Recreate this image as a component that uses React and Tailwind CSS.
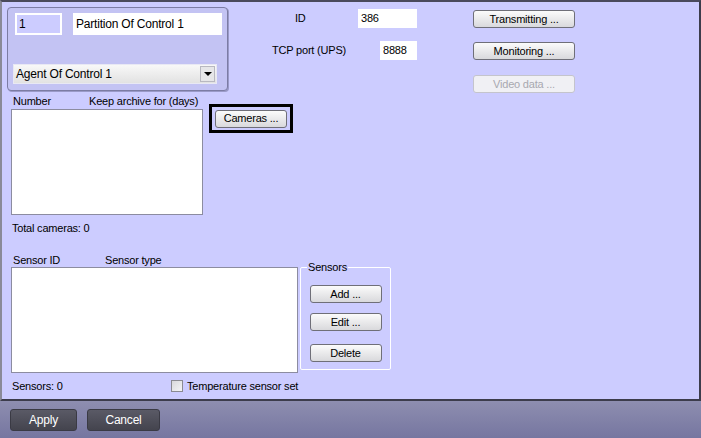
import React from 'react';

const font = { fontFamily: '"Liberation Sans", Arial, sans-serif', letterSpacing: '-0.2px' };

// classic grey XP-style push button
function Btn({ children, className = '', disabled = false }) {
  return (
    <div
      className={`flex items-center justify-center rounded-[3px] border text-[11px] leading-none ${
        disabled
          ? 'border-[#c4c4cc] bg-[#f0f0f4] text-[#a8a8b0]'
          : 'border-[#6f6f78] bg-gradient-to-b from-[#fbfbfb] to-[#d9d9dc] text-black'
      } ${className}`}
    >
      {children}
    </div>
  );
}

function Field({ value, className = '' }) {
  return (
    <div className={`flex items-center bg-white px-[3px] text-[11px] leading-none text-black ${className}`}>
      {value}
    </div>
  );
}

export default function App() {
  return (
    <div style={font} className="flex h-[438px] w-[701px] flex-col overflow-hidden bg-[#7a7aa0] text-[11px] text-black">
      {/* main panel */}
      <div className="flex h-[401px] flex-col border-t-2 border-b-2 border-l-2 border-r-2 border-t-[#4a4a5c] border-b-[#3c3c4c] border-l-[#8a8a98] border-r-[#3c3c4c] bg-[#ccccff]">
        {/* row 1 */}
        <div className="mt-[5px] flex">
          <div className="ml-[5px] flex h-[84px] w-[221px] flex-col rounded-[4px] border border-[#7c7ca4] bg-[#c3c3f3] shadow-[1px_1px_0_#9a9ac8]">
            <div className="mt-[5px] flex">
              <div className="ml-[7px] flex h-[22px] w-[47px] items-center border-2 border-white bg-[#ccccff] px-[2px] text-[12px]">1</div>
              <Field value="Partition Of Control 1" className="ml-[11px] h-[22px] w-[149px] text-[12px]" />
            </div>
            <div className="ml-[5px] mt-[29px] flex h-[20px] w-[204px] items-center justify-between border border-[#e8e8f4] bg-gradient-to-b from-[#f8f8f8] to-[#e2e2e2]">
              <span className="pl-[2px] text-[12px]">Agent Of Control 1</span>
              <div className="mr-[1px] flex h-[16px] w-[15px] items-center justify-center border border-[#b8b8c0] bg-[#e6e6e8]">
                <div className="h-0 w-0 border-x-[4px] border-t-[4px] border-x-transparent border-t-black" />
              </div>
            </div>
          </div>

          <div className="flex w-[189px] flex-col">
            <div className="mt-[2px] flex items-center">
              <span className="ml-[67px] w-[63px]">ID</span>
              <Field value="386" className="h-[19px] w-[59px]" />
            </div>
            <div className="mt-[13px] flex items-center">
              <span className="ml-[44px] w-[108px]">TCP port (UPS)</span>
              <Field value="8888" className="h-[19px] w-[37px]" />
            </div>
          </div>

          <div className="ml-[56px] flex flex-col">
            <Btn className="mt-[3px] h-[18px] w-[102px]">Transmitting ...</Btn>
            <Btn className="mt-[14px] h-[18px] w-[102px]">Monitoring ...</Btn>
            <Btn disabled className="mt-[15px] h-[18px] w-[102px]">Video data ...</Btn>
          </div>
        </div>

        {/* row 2: cameras */}
        <div className="mt-[1px] flex">
          <div className="ml-[9px] flex flex-col">
            <div className="flex h-[15px] items-center">
              <span className="ml-[2px] w-[76px]">Number</span>
              <span>Keep archive for (days)</span>
            </div>
            <div className="h-[106px] w-[192px] border border-[#8c8ca0] bg-white" />
            <div className="mt-[6px] flex h-[14px] items-center pl-[1px]">Total cameras: 0</div>
          </div>
          <div className="ml-[6px] mt-[10px] flex h-[29px] w-[84px] items-center justify-center border-[3px] border-black">
            <Btn className="h-[18px] w-[72px]">Cameras ...</Btn>
          </div>
        </div>

        {/* row 3: sensors */}
        <div className="mt-[18px] flex">
          <div className="ml-[9px] flex flex-col">
            <div className="flex h-[14px] items-center">
              <span className="ml-[2px] w-[92px]">Sensor ID</span>
              <span>Sensor type</span>
            </div>
            <div className="h-[106px] w-[287px] border border-[#8c8ca0] bg-white" />
          </div>
          <div className="relative ml-[2px] mt-[14px] flex h-[103px] w-[91px] flex-col items-center rounded-[2px] border border-white">
            <span className="absolute -top-[7px] left-[6px] bg-[#ccccff] px-[1px] leading-[13px]">Sensors</span>
            <Btn className="mt-[17px] h-[18px] w-[72px]">Add ...</Btn>
            <Btn className="mt-[10px] h-[18px] w-[72px]">Edit ...</Btn>
            <Btn className="mt-[13px] h-[18px] w-[72px]">Delete</Btn>
          </div>
        </div>

        <div className="mt-[5px] flex items-center">
          <span className="ml-[10px] w-[159px]">Sensors: 0</span>
          <div className="h-[12px] w-[12px] border border-[#8a8a92] bg-gradient-to-br from-[#d8d8dc] to-[#f4f4f6]" />
          <span className="ml-[4px]">Temperature sensor set</span>
        </div>
      </div>

      {/* bottom bar */}
      <div className="flex flex-1 items-start bg-gradient-to-b from-[#8e8eb0] to-[#7676a0] pl-[10px] pt-[8px]">
        <div className="flex h-[22px] w-[67px] items-center justify-center rounded-[3px] border border-[#3a3a44] bg-gradient-to-b from-[#5a5a66] to-[#44444e] text-[12px] text-white">
          Apply
        </div>
        <div className="ml-[10px] flex h-[22px] w-[73px] items-center justify-center rounded-[3px] border border-[#3a3a44] bg-gradient-to-b from-[#5a5a66] to-[#44444e] text-[12px] text-white">
          Cancel
        </div>
      </div>
    </div>
  );
}
